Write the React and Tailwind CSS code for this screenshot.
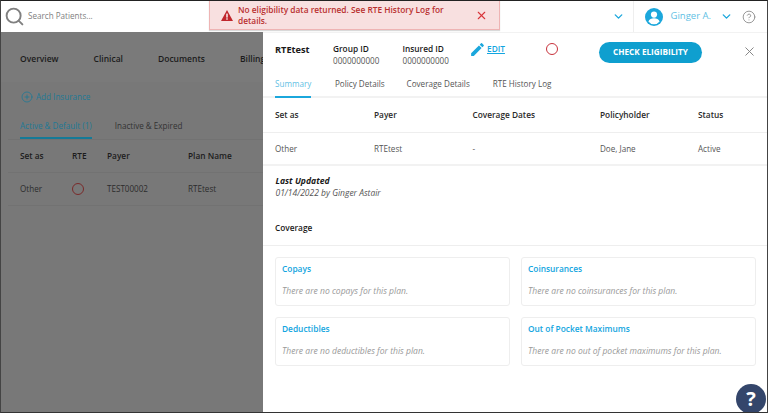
import React from "react";
import { Search, ChevronDown, X, CirclePlus, CircleHelp } from "lucide-react";

const Card = ({ title, text }) => (
  <div className="h-[49px] rounded-[3px] border border-[#eeeeee] px-[6px] pt-[5px]">
    <div className="text-[8.350px] leading-[12px] font-semibold text-[#12a5e0]">{title}</div>
    <div className="mt-[10px] text-[8.550px] leading-[12px] italic text-[#999999]">{text}</div>
  </div>
);

export default function App() {
  return (
    <div className="relative flex h-[413px] w-[768px] flex-col overflow-hidden border border-x-[#444] border-t-[#222] border-b-[#333] bg-white font-['Open_Sans',sans-serif]">
      <header className="flex h-[31px] shrink-0 items-center">
        <Search className="ml-[3px] h-[21px] w-[21px] text-[#808080]" strokeWidth={2.2} />
        <span className="ml-[3px] text-[8.100px] text-[#808080]">Search Patients...</span>
        <div className="ml-auto flex h-full items-center">
          <ChevronDown className="mr-[8px] h-[13px] w-[13px] text-[#1ba7dc]" strokeWidth={2.5} />
          <div className="flex h-full items-center border-l border-[#eeeeee] pl-[11px] pr-[11px]">
            <svg viewBox="0 0 18 18" className="h-[18px] w-[18px]">
              <circle cx="9" cy="9" r="9" fill="#1ba7dc" />
              <circle cx="9" cy="6.600" r="3.100" fill="#fff" />
              <path d="M3.400 13.400c.8-2.400 3-3.200 5.600-3.200s4.800.8 5.600 3.200a7 7 0 0 1-11.200 0z" fill="#fff" />
            </svg>
            <span className="ml-[8px] text-[9.500px] text-[#5fbfe4]">Ginger A.</span>
            <ChevronDown className="ml-[9px] h-[13px] w-[13px] text-[#1ba7dc]" strokeWidth={2.5} />
            <CircleHelp className="ml-[9px] h-[14px] w-[14px] text-[#8a8a8a]" strokeWidth={1.500} />
          </div>
        </div>
      </header>

      <div className="flex min-h-0 flex-1">
        <aside className="w-[262px] shrink-0 overflow-hidden bg-[#787878]">
          <nav className="flex h-[50px] items-end gap-[35px] whitespace-nowrap bg-[#7a7a7a] pb-[17px] pl-[19px] text-[8.500px] leading-[12px] font-semibold text-[#1c1c1c]">
            <span>Overview</span>
            <span>Clinical</span>
            <span>Documents</span>
            <span>Billing</span>
          </nav>
          <div className="mt-[9px] ml-[20px] flex h-[12px] items-center text-[8.100px] text-[#1f7896]">
            <CirclePlus className="h-[12px] w-[12px]" strokeWidth={1.600} />
            <span className="ml-[3px]">Add Insurance</span>
          </div>
          <div className="mt-[15px] ml-[7px] flex h-[22px] items-start border-b border-[#727272] pl-[12px] pt-[1px] text-[8.100px] leading-[14px]">
            <span className="h-[20px] border-b-2 border-[#157a97] text-[#1f7896]">Active &amp; Default (1)</span>
            <span className="ml-[23px] text-[#333333]">Inactive &amp; Expired</span>
          </div>
          <div className="ml-[7px] flex h-[33px] items-center border-b border-[#727272] pl-[12px] text-[8.300px] font-semibold text-[#1c1c1c]">
            <span className="w-[52px]">Set as</span>
            <span className="w-[35px]">RTE</span>
            <span className="w-[81px]">Payer</span>
            <span>Plan Name</span>
          </div>
          <div className="ml-[7px] flex h-[33px] items-center border-b border-[#727272] pl-[12px] text-[8.100px] text-[#2c2c2c]">
            <span className="w-[52px]">Other</span>
            <span className="w-[35px]">
              <span className="block h-[12px] w-[12px] rounded-full border border-[#7a2a2a]" />
            </span>
            <span className="w-[81px]">TEST00002</span>
            <span>RTEtest</span>
          </div>
        </aside>

        <main className="min-w-0 flex-1 text-[#2a2a2a]">
          <div className="flex h-[45px] items-start border-t border-[#f2f2f2] pl-[12px] pt-[10px]">
            <div className="w-[58px] pt-[1px] text-[9.200px] font-bold leading-[12px] text-[#1a1a1a]">RTEtest</div>
            <div className="w-[69.500px]">
              <div className="text-[8.300px] font-semibold leading-[12px] text-[#1a1a1a]">Group ID</div>
              <div className="text-[8.100px] leading-[11px] text-[#555]">0000000000</div>
            </div>
            <div className="w-[68.500px]">
              <div className="text-[8.300px] font-semibold leading-[12px] text-[#1a1a1a]">Insured ID</div>
              <div className="text-[8.100px] leading-[11px] text-[#555]">0000000000</div>
            </div>
            <svg viewBox="0 0 24 24" className="-ml-[2px] -mt-[2px] h-[17px] w-[17px] fill-[#1ba7dc]">
              <path d="M3 17.250V21h3.750L17.810 9.940l-3.750-3.750L3 17.250zM20.710 7.040a1 1 0 0 0 0-1.410l-2.340-2.340a1 1 0 0 0-1.410 0l-1.830 1.830 3.750 3.750 1.830-1.830z" />
            </svg>
            <span className="ml-[1px] text-[8.300px] font-semibold leading-[12px] text-[#12a5e0] underline">EDIT</span>
            <span className="ml-[41px] block h-[12px] w-[12px] rounded-full border border-[#c8323c]" />
            <button className="ml-[41px] -mt-[1px] h-[21px] w-[103px] rounded-full bg-[#0f9fcf] text-[8.200px] font-bold text-white">CHECK ELIGIBILITY</button>
            <X className="ml-[40px] mt-[1px] h-[15px] w-[15px] text-[#808080]" strokeWidth={1.500} />
          </div>
          <div className="flex h-[21px] border-b-2 border-[#f2f2f2] pl-[12px] text-[8.100px] leading-[14px] text-[#555]">
            <span className="h-[21px] w-[36px] border-b-2 border-[#1ba7dc] text-[#5fbfe4]">Summary</span>
            <span className="ml-[24px]">Policy Details</span>
            <span className="ml-[22px]">Coverage Details</span>
            <span className="ml-[23px]">RTE History Log</span>
          </div>
          <div className="flex h-[35px] items-center border-b border-[#eeeeee] pl-[12px] text-[8.300px] font-semibold text-[#2a2a2a]">
            <span className="w-[99px]">Set as</span>
            <span className="w-[98.500px]">Payer</span>
            <span className="w-[127.500px]">Coverage Dates</span>
            <span className="w-[98px]">Policyholder</span>
            <span>Status</span>
          </div>
          <div className="flex h-[33px] items-center border-b-2 border-[#f2f2f2] pl-[12px] pt-[1px] text-[8.100px] text-[#555]">
            <span className="w-[99px]">Other</span>
            <span className="w-[98.500px]">RTEtest</span>
            <span className="w-[127.500px]">-</span>
            <span className="w-[98px]">Doe, Jane</span>
            <span>Active</span>
          </div>
          <div className="pl-[12.500px] pt-[10px]">
            <div className="text-[8.600px] font-bold italic leading-[11px] text-[#1a1a1a]">Last Updated</div>
            <div className="text-[8.500px] italic leading-[11px] text-[#555]">01/14/2022 by Ginger Astair</div>
          </div>
          <div className="mt-[14px] flex h-[34px] items-center border-b border-[#eeeeee] pl-[12px] text-[8.300px] font-semibold text-[#1a1a1a]">Coverage</div>
          <div className="mt-[11px] ml-[12px] grid grid-cols-[235px_235px] gap-x-[11px] gap-y-[11px]">
            <Card title="Copays" text="There are no copays for this plan." />
            <Card title="Coinsurances" text="There are no coinsurances for this plan." />
            <Card title="Deductibles" text="There are no deductibles for this plan." />
            <Card title="Out of Pocket Maximums" text="There are no out of pocket maximums for this plan." />
          </div>
        </main>
      </div>

      <div className="absolute left-[208px] -top-px flex h-[30px] w-[291px] items-center border border-[#eeb4b4] bg-[#f8e0e0] shadow-[0_1px_1px_rgba(0,0,0,0.15)]">
        <svg viewBox="0 0 12 11" className="ml-[11px] h-[11px] w-[12px]">
          <path d="M6 0 12 11H0z" fill="#c0272d" />
          <rect x="5.300" y="3.600" width="1.400" height="4" fill="#fff" />
          <rect x="5.300" y="8.300" width="1.400" height="1.400" fill="#fff" />
        </svg>
        <div className="ml-[5px] w-[220px] text-[8.350px] font-semibold leading-[11px] text-[#b8302f]">No eligibility data returned. See RTE History Log for details.</div>
        <X className="ml-[17px] h-[13px] w-[13px] text-[#d8343a]" strokeWidth={2} />
      </div>

      <div className="absolute left-[735px] top-[383px] flex h-[30px] w-[30px] items-center justify-center rounded-full bg-[#34466b] text-[20px] font-bold leading-none text-white">?</div>
    </div>
  );
}
